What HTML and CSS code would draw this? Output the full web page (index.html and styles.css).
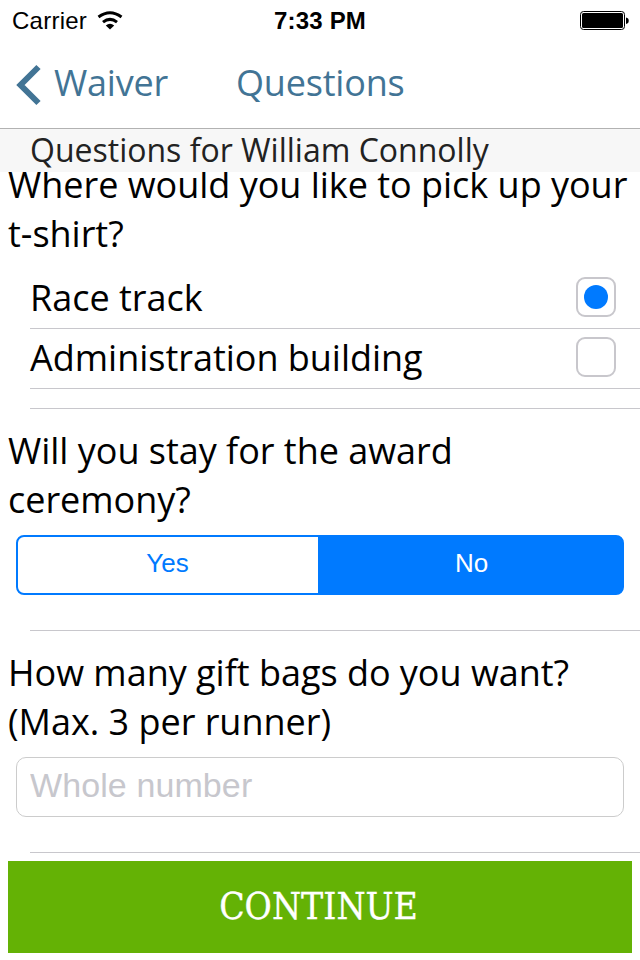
FILE: index.html
```html
<!DOCTYPE html>
<html lang="en">
<head>
<meta charset="utf-8">
<title>Questions</title>
<link rel="stylesheet" href="styles.css">
</head>
<body>
<div class="app">
  <header class="top">
    <div class="status">
      <div class="carrier"><span>Carrier</span>
        <svg width="26" height="20" viewBox="0 0 26 20" fill="none" stroke="#000" stroke-width="3"><path d="M1.500 6Q13-2.500 24.500 6M6 11.200Q13 5.500 20 11.200"/><path d="M8.800 14.500Q13 11 17.200 14.500L13 18.500Z" fill="#000" stroke="none"/></svg>
      </div>
      <b class="time">7:33 PM</b>
      <svg class="battery" width="50" height="20" viewBox="0 0 50 20"><rect x=".500" y=".500" width="44" height="18" rx="3" fill="none" stroke="#000"/><rect x="2" y="2" width="41" height="15" rx="1.500"/><path d="M46 6.500a3.300 3.300 0 0 1 0 6.500z"/></svg>
    </div>
    <nav class="nav">
      <svg width="26" height="42" viewBox="0 0 26 42" fill="none" stroke="#427495" stroke-width="6"><path d="M22.500 3L4.500 21L22.500 39"/></svg>
      <span class="back">Waiver</span>
      <h1>Questions</h1>
    </nav>
  </header>
  <main>
    <h2 class="section">Questions for William Connolly</h2>
    <section class="question pickup">
      <p>Where would you like to pick up your<br>t-shirt?</p>
      <div class="option"><span>Race track</span><i class="box on"></i></div>
      <div class="option"><span>Administration building</span><i class="box"></i></div>
    </section>
    <section class="question award">
      <p>Will you stay for the award<br>ceremony?</p>
      <div class="segments"><span>Yes</span><span class="chosen">No</span></div>
    </section>
    <section class="question bags">
      <p>How many gift bags do you want?<br>(Max. 3 per runner)</p>
      <input type="text" placeholder="Whole number">
    </section>
  </main>
  <button class="continue">CONTINUE</button>
</div>
</body>
</html>
```

FILE: styles.css
```css
* { box-sizing: border-box; margin: 0; padding: 0; }
body { width: 640px; height: 960px; overflow: hidden; background: #fff; color: #000; font-family: "Open Sans", sans-serif; }
.app { height: 960px; display: flex; flex-direction: column; }
.top { height: 129px; border-bottom: 1px solid #b2b2b2; }
.status { height: 42px; display: grid; grid-template-columns: 1fr auto 1fr; align-items: center; padding: 0 10px 0 12px; font: 24px/42px "Liberation Sans", sans-serif; }
.carrier { display: flex; align-items: center; gap: 10px; }
.carrier span { letter-spacing: .25px; }
.time { font-size: 24px; letter-spacing: .2px; margin-left: -2px; }
.battery { justify-self: end; }
.nav { height: 81px; display: flex; align-items: center; padding-left: 16px; color: #427495; font-size: 36px; letter-spacing: -.2px; }
.nav svg { margin-top: 4px; }
.back { margin-left: 12px; }
h1 { font-size: 36px; font-weight: 400; margin-left: 68px; }
main { height: 732px; display: flex; flex-direction: column; }
.section { height: 43px; flex-shrink: 0; background: #f7f7f7; padding-left: 30px; font-size: 32px; font-weight: 400; line-height: 41px; color: #222; }
.question { display: flex; flex-direction: column; white-space: nowrap; }
.question::after { content: ""; flex: 0 0 1px; margin: auto 0 0 30px; background: #c8c7cc; }
.question p { padding-left: 8px; font-size: 36px; line-height: 49px; letter-spacing: -.02px; }
.pickup { height: 237px; overflow: hidden; }
.pickup p { margin-top: -12px; height: 109px; flex-shrink: 0; }
.option { height: 60px; flex-shrink: 0; margin-left: 30px; padding: 0 24px 2px 0; border-bottom: 1px solid #c8c7cc; display: flex; justify-content: space-between; align-items: center; font-size: 36px; letter-spacing: -.02px; }
.box { width: 40px; height: 40px; margin-top: -1px; border: 2px solid #c8c7cc; border-radius: 9px; display: flex; align-items: center; justify-content: center; }
.on::before { content: ""; width: 24px; height: 24px; border-radius: 50%; background: #007aff; }
.award { height: 222px; padding-top: 17px; }
.segments { width: 608px; height: 60px; margin: 11px 16px 0; border: 2px solid #007aff; border-radius: 8px; background: linear-gradient(to right, #fff 300px, #007aff 300px) border-box; background-origin: padding-box; display: flex; color: #007aff; font: 26px/53px "Liberation Sans", sans-serif; text-align: center; }
.segments span { width: 299px; }
.segments .chosen { flex: 1; padding-left: 4px; color: #fff; }
.bags { height: 222px; padding-top: 17px; }
input { display: block; width: 608px; height: 60px; margin: 11px 16px 0; border: 1px solid #ccc; border-radius: 10px; padding: 0 13px 3px; font: 34px "Liberation Sans", sans-serif; letter-spacing: .1px; }
input::placeholder { color: #c7c7cd; opacity: 1; }
.continue { width: 624px; height: 92px; margin-left: 8px; padding: 0 3px 1px 0; border: 0; background: #64b205; color: #fff; font: 37px "DejaVu Serif Condensed", "DejaVu Serif", serif; font-stretch: condensed; -webkit-text-stroke: .3px #fff; }
```
